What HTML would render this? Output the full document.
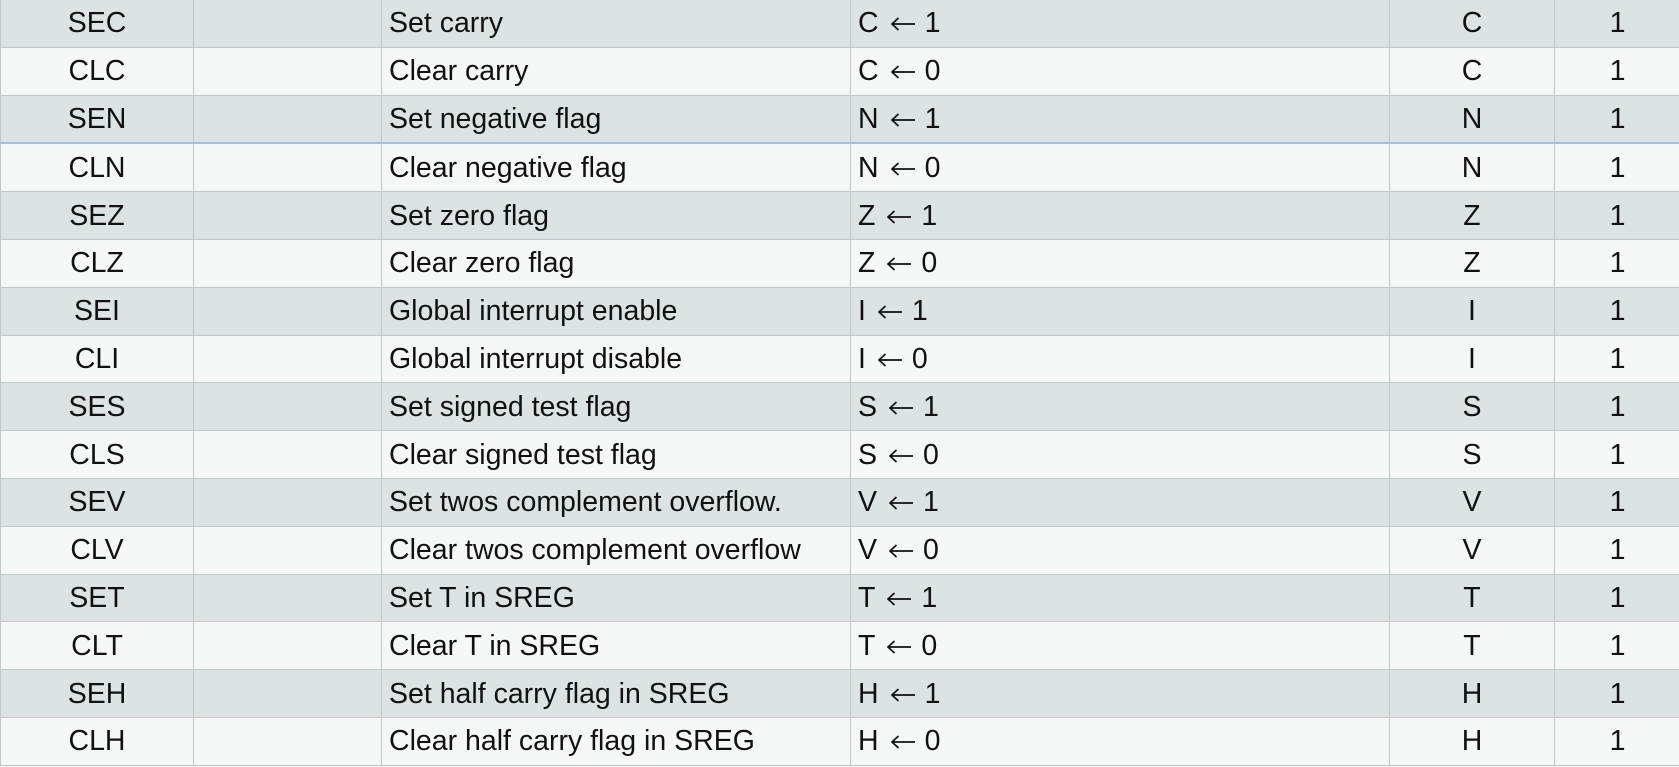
<!DOCTYPE html>
<html><head><meta charset="utf-8"><style>
html,body{margin:0;padding:0;background:#f6f8f8;overflow:hidden}
table{border-collapse:collapse;position:absolute;top:-1px;left:0;width:1680px;table-layout:fixed;font-family:"Liberation Sans",sans-serif;font-size:28.5px;color:#111}
td{height:46.8px;border:1px solid #c2c8c8;padding:0 7px;white-space:nowrap;vertical-align:middle;line-height:30px}
tr:nth-child(odd) td{background:#dce3e3}
tr:nth-child(even) td{background:#f6f8f8}
td.c{text-align:center}
tr.b td{border-bottom:2px solid #a3bfe2}
.a{display:inline-block;width:24px;height:14px;margin:0 10px 0 12px;vertical-align:1px}
</style></head><body>
<svg width="0" height="0" style="position:absolute"><symbol id="ar" viewBox="0 0 24 14"><path d="M1 7H24M7.5 1L1 7L7.5 13" fill="none" stroke="#111" stroke-width="1.7"/></symbol></svg>
<table>
<colgroup><col style="width:193px"><col style="width:188px"><col style="width:469px"><col style="width:539px"><col style="width:165px"><col style="width:126px"></colgroup>
<tr><td class="c">SEC</td><td></td><td>Set carry</td><td>C<svg class="a"><use href="#ar"/></svg>1</td><td class="c">C</td><td class="c">1</td></tr>
<tr><td class="c">CLC</td><td></td><td>Clear carry</td><td>C<svg class="a"><use href="#ar"/></svg>0</td><td class="c">C</td><td class="c">1</td></tr>
<tr class="b"><td class="c">SEN</td><td></td><td>Set negative flag</td><td>N<svg class="a"><use href="#ar"/></svg>1</td><td class="c">N</td><td class="c">1</td></tr>
<tr><td class="c">CLN</td><td></td><td>Clear negative flag</td><td>N<svg class="a"><use href="#ar"/></svg>0</td><td class="c">N</td><td class="c">1</td></tr>
<tr><td class="c">SEZ</td><td></td><td>Set zero flag</td><td>Z<svg class="a"><use href="#ar"/></svg>1</td><td class="c">Z</td><td class="c">1</td></tr>
<tr><td class="c">CLZ</td><td></td><td>Clear zero flag</td><td>Z<svg class="a"><use href="#ar"/></svg>0</td><td class="c">Z</td><td class="c">1</td></tr>
<tr><td class="c">SEI</td><td></td><td>Global interrupt enable</td><td>I<svg class="a"><use href="#ar"/></svg>1</td><td class="c">I</td><td class="c">1</td></tr>
<tr><td class="c">CLI</td><td></td><td>Global interrupt disable</td><td>I<svg class="a"><use href="#ar"/></svg>0</td><td class="c">I</td><td class="c">1</td></tr>
<tr><td class="c">SES</td><td></td><td>Set signed test flag</td><td>S<svg class="a"><use href="#ar"/></svg>1</td><td class="c">S</td><td class="c">1</td></tr>
<tr><td class="c">CLS</td><td></td><td>Clear signed test flag</td><td>S<svg class="a"><use href="#ar"/></svg>0</td><td class="c">S</td><td class="c">1</td></tr>
<tr><td class="c">SEV</td><td></td><td>Set twos complement overflow.</td><td>V<svg class="a"><use href="#ar"/></svg>1</td><td class="c">V</td><td class="c">1</td></tr>
<tr><td class="c">CLV</td><td></td><td>Clear twos complement overflow</td><td>V<svg class="a"><use href="#ar"/></svg>0</td><td class="c">V</td><td class="c">1</td></tr>
<tr><td class="c">SET</td><td></td><td>Set T in SREG</td><td>T<svg class="a"><use href="#ar"/></svg>1</td><td class="c">T</td><td class="c">1</td></tr>
<tr><td class="c">CLT</td><td></td><td>Clear T in SREG</td><td>T<svg class="a"><use href="#ar"/></svg>0</td><td class="c">T</td><td class="c">1</td></tr>
<tr><td class="c">SEH</td><td></td><td>Set half carry flag in SREG</td><td>H<svg class="a"><use href="#ar"/></svg>1</td><td class="c">H</td><td class="c">1</td></tr>
<tr><td class="c">CLH</td><td></td><td>Clear half carry flag in SREG</td><td>H<svg class="a"><use href="#ar"/></svg>0</td><td class="c">H</td><td class="c">1</td></tr>
</table>
</body></html>
